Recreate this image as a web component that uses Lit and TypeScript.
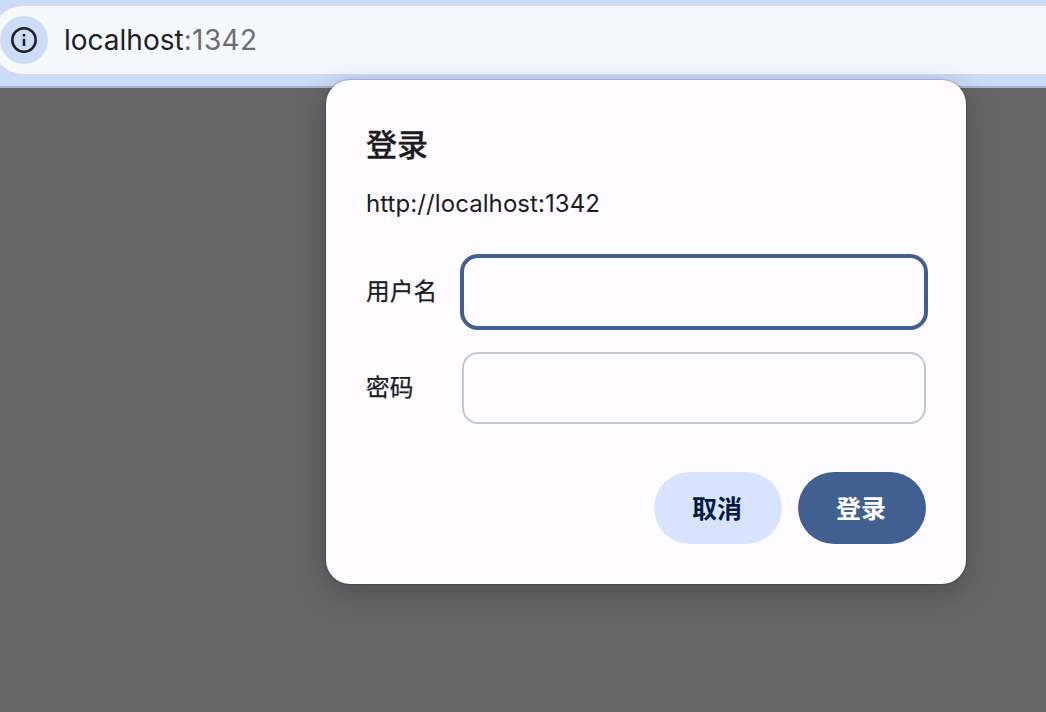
import { css, html, LitElement } from "lit";
import { customElement, property } from "lit/decorators.js";

@customElement("x-address-bar")
export class AddressBar extends LitElement {
  static styles = [
    css`
      :host {
        display: block;
        box-sizing: border-box;
        height: 88px;
        padding-top: 6px;
        background-color: #cddcf6;
        border-bottom: 2px solid #a6b5d1;
      }

      .omnibox {
        display: flex;
        align-items: center;
        box-sizing: border-box;
        height: 68px;
        margin: 0 -34px 0 -10px;
        padding-left: 10px;
        border-radius: 34px;
        background-color: #f5f9fe;
      }

      .site-info {
        display: flex;
        align-items: center;
        justify-content: center;
        width: 48px;
        height: 48px;
        border-radius: 50%;
        background-color: #cddcf6;
      }

      .url {
        margin-left: 16px;
        color: #1f2023;
        font-size: 28px;
        line-height: 34px;
        white-space: nowrap;
      }

      .port {
        color: #6b6d71;
        letter-spacing: 0.4px;
      }
    `,
  ];

  @property()
  host: string = "";

  @property()
  port: string = "";

  render() {
    return html`
      <div class="omnibox">
        <div class="site-info">
          <svg width="26" height="26" viewBox="0 0 26 26" fill="none">
            <circle cx="13" cy="13" r="11.7" stroke="#1f2023" stroke-width="2.5" />
            <rect x="11.7" y="11.8" width="2.6" height="7.2" fill="#1f2023" />
            <rect x="11.7" y="7" width="2.6" height="2.6" fill="#1f2023" />
          </svg>
        </div>
        <div class="url">${this.host}<span class="port">:${this.port}</span></div>
      </div>
    `;
  }
}

@customElement("x-login-dialog")
export class LoginDialog extends LitElement {
  static styles = [
    css`
      :host {
        display: block;
        box-sizing: border-box;
        width: 640px;
        height: 504px;
        padding: 40px;
        border-radius: 24px;
        background-color: #fdfbff;
        color: #1a1c1f;
        box-shadow:
          0 0 2px rgba(0, 0, 0, 0.5),
          0 8px 32px rgba(0, 0, 0, 0.24);
      }

      .title {
        margin: 3px 0 0;
        font-size: 31px;
        font-weight: 500;
        line-height: 44px;
        -webkit-text-stroke: 0.3px;
      }

      .origin {
        margin: 21px 0 0;
        font-size: 24px;
        line-height: 32px;
        letter-spacing: 0.08px;
      }

      .fields {
        display: grid;
        grid-template-columns: 96px 1fr;
        row-gap: 24px;
        align-items: center;
        margin-top: 36px;
      }

      label {
        font-size: 23.7px;
        line-height: 32px;
        -webkit-text-stroke: 0.25px;
      }

      input {
        box-sizing: border-box;
        width: 100%;
        height: 72px;
        padding: 0 16px;
        border: 2px solid #c4c6cd;
        border-radius: 16px;
        outline: none;
        background: transparent;
        font: inherit;
        font-size: 24px;
      }

      .active {
        width: calc(100% + 4px);
        height: 76px;
        margin: -2px;
        border: 4px solid #415f91;
        border-radius: 18px;
      }

      .actions {
        display: flex;
        justify-content: flex-end;
        gap: 16px;
        margin-top: 48px;
      }

      button {
        width: 128px;
        height: 72px;
        padding: 0 2px 2px 0;
        border: none;
        border-radius: 36px;
        background-color: #d7e3ff;
        color: #001b3e;
        font-family: inherit;
        font-size: 25px;
        font-weight: 600;
      }

      .primary {
        background-color: #415f91;
        color: white;
      }
    `,
  ];

  @property()
  origin: string = "";

  render() {
    return html`
      <h1 class="title">登录</h1>
      <p class="origin">${this.origin}</p>
      <div class="fields">
        <label for="username">用户名</label>
        <input id="username" class="active" type="text" />
        <label for="password">密码</label>
        <input id="password" type="password" />
      </div>
      <div class="actions">
        <button>取消</button>
        <button class="primary">登录</button>
      </div>
    `;
  }
}

@customElement("app-root")
export class AppRoot extends LitElement {
  static styles = [
    css`
      :host {
        display: block;
        position: relative;
        height: 100vh;
        overflow: hidden;
        background-color: #666666;
        font-family: Inter, "Noto Sans CJK SC", sans-serif;
      }

      .dialog {
        position: absolute;
        top: 80px;
        left: 326px;
      }
    `,
  ];

  render() {
    return html`
      <x-address-bar host="localhost" port="1342"></x-address-bar>
      <x-login-dialog class="dialog" origin="http://localhost:1342"></x-login-dialog>
    `;
  }
}
